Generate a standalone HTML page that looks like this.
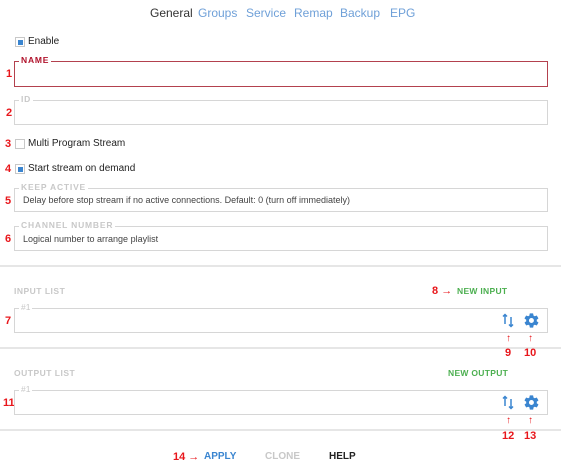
<!DOCTYPE html>
<html><head><meta charset="utf-8"><style>
*{margin:0;padding:0;box-sizing:border-box}
body{width:561px;height:470px;background:#fff;font-family:"Liberation Sans",sans-serif;position:relative;overflow:hidden;color:#333}
.a{position:absolute;white-space:nowrap}
.tab{font-size:12px;color:#6fa0d8;top:6px}
.num{color:#e8161b;font-weight:bold;font-size:11px}
.box{position:absolute;left:14px;width:534px;border:1px solid #d6d6d6}
.lg{position:absolute;top:-7px;left:4px;background:#fff;padding:0 2px;font-size:8.5px;font-weight:bold;letter-spacing:.8px;color:#c8c8c8;line-height:11px}
.cb{position:absolute;width:10px;height:10px;border:1px solid #c8c8c8;background:#fff}
.cb.on::after{content:"";position:absolute;left:2px;top:2px;width:5px;height:5px;background:#3a85d0}
.lab{font-size:10px;color:#222}
.hint{font-size:9px;color:#444}
.sec{font-size:8.5px;font-weight:bold;color:#c8c8c8;letter-spacing:.5px}
.grn{font-size:8.5px;font-weight:bold;color:#4caf50;letter-spacing:.3px}
.sep{position:absolute;left:0;width:561px;height:2px;background:#e6e6e6}
.arr{color:#e8161b;font-size:10px}
</style></head><body>
<div class="a tab" style="left:150px;color:#333">General</div>
<div class="a tab" style="left:198px">Groups</div>
<div class="a tab" style="left:246px">Service</div>
<div class="a tab" style="left:294px">Remap</div>
<div class="a tab" style="left:340px">Backup</div>
<div class="a tab" style="left:390px">EPG</div>

<div class="cb on" style="left:15px;top:37px"></div>
<div class="a lab" style="left:28px;top:36px">Enable</div>

<div class="a num" style="left:6px;top:68px">1</div>
<div class="box" style="top:61px;height:26px;border-color:#b3414e"><div class="lg" style="color:#b0112a">NAME</div></div>
<div class="a num" style="left:6px;top:107px">2</div>
<div class="box" style="top:100px;height:25px"><div class="lg">ID</div></div>

<div class="a num" style="left:5px;top:138px">3</div>
<div class="cb" style="left:15px;top:139px"></div>
<div class="a lab" style="left:28px;top:138px">Multi Program Stream</div>
<div class="a num" style="left:5px;top:163px">4</div>
<div class="cb on" style="left:15px;top:164px"></div>
<div class="a lab" style="left:28px;top:163px">Start stream on demand</div>

<div class="a num" style="left:5px;top:195px">5</div>
<div class="box" style="top:188px;height:24px"><div class="lg">KEEP ACTIVE</div><div class="a hint" style="left:8px;top:6px">Delay before stop stream if no active connections. Default: 0 (turn off immediately)</div></div>
<div class="a num" style="left:5px;top:233px">6</div>
<div class="box" style="top:226px;height:25px"><div class="lg">CHANNEL NUMBER</div><div class="a hint" style="left:8px;top:7px">Logical number to arrange playlist</div></div>

<div class="sep" style="top:265px"></div>

<div class="a sec" style="left:14px;top:286px">INPUT LIST</div>
<div class="a num" style="left:432px;top:285px">8 <span style="font-weight:normal">→</span></div>
<div class="a grn" style="left:457px;top:286px">NEW INPUT</div>
<div class="a num" style="left:5px;top:315px">7</div>
<div class="box" style="top:308px;height:25px"><div class="lg" style="font-weight:normal;letter-spacing:0">#1</div></div>

<svg class="a" style="left:502px;top:313px" width="12" height="15" viewBox="0 0 12 15"><g stroke="#3a85d0" stroke-width="1.5" fill="none"><path d="M3 11V1.5M1 3.5L3 1.5l2 2"/><path d="M9 4v9.5M7 11.5l2 2 2-2"/></g></svg>
<svg class="a" style="left:523px;top:312px" width="17" height="17" viewBox="0 0 24 24"><path fill="#3a85d0" d="M19.4 13c.04-.33.06-.66.06-1s-.02-.67-.06-1l2.1-1.65c.2-.15.24-.42.12-.64l-2-3.46c-.12-.22-.39-.3-.61-.22l-2.49 1a7.3 7.3 0 0 0-1.69-.98L14.4 2.4A.49.49 0 0 0 13.9 2h-4c-.25 0-.46.18-.49.42l-.38 2.65c-.61.25-1.17.59-1.69.98l-2.49-1a.5.5 0 0 0-.61.22l-2 3.46c-.13.22-.07.49.12.64L4.57 11c-.04.33-.07.67-.07 1s.03.67.07 1l-2.11 1.65c-.19.15-.24.42-.12.64l2 3.46c.12.22.39.3.61.22l2.49-1c.52.4 1.08.73 1.69.98l.38 2.65c.03.24.24.42.49.42h4c.25 0 .46-.18.49-.42l.38-2.65c.61-.25 1.17-.59 1.69-.98l2.49 1c.23.09.49 0 .61-.22l2-3.46c.12-.22.07-.49-.12-.64L19.4 13zM11.9 15.5a3.5 3.5 0 1 1 0-7 3.5 3.5 0 0 1 0 7z"/></svg>
<div class="a arr" style="left:506px;top:333px">↑</div>
<div class="a arr" style="left:528px;top:333px">↑</div>
<div class="sep" style="top:347px"></div>
<div class="a num" style="left:505px;top:347px">9</div>
<div class="a num" style="left:524px;top:347px">10</div>

<div class="a sec" style="left:14px;top:368px">OUTPUT LIST</div>
<div class="a grn" style="left:448px;top:368px">NEW OUTPUT</div>
<div class="a num" style="left:3px;top:397px">11</div>
<div class="box" style="top:390px;height:25px"><div class="lg" style="font-weight:normal;letter-spacing:0">#1</div></div>
<svg class="a" style="left:502px;top:395px" width="12" height="15" viewBox="0 0 12 15"><g stroke="#3a85d0" stroke-width="1.5" fill="none"><path d="M3 11V1.5M1 3.5L3 1.5l2 2"/><path d="M9 4v9.5M7 11.5l2 2 2-2"/></g></svg>
<svg class="a" style="left:523px;top:394px" width="17" height="17" viewBox="0 0 24 24"><path fill="#3a85d0" d="M19.4 13c.04-.33.06-.66.06-1s-.02-.67-.06-1l2.1-1.65c.2-.15.24-.42.12-.64l-2-3.46c-.12-.22-.39-.3-.61-.22l-2.49 1a7.3 7.3 0 0 0-1.69-.98L14.4 2.4A.49.49 0 0 0 13.9 2h-4c-.25 0-.46.18-.49.42l-.38 2.65c-.61.25-1.17.59-1.69.98l-2.49-1a.5.5 0 0 0-.61.22l-2 3.46c-.13.22-.07.49.12.64L4.57 11c-.04.33-.07.67-.07 1s.03.67.07 1l-2.11 1.65c-.19.15-.24.42-.12.64l2 3.46c.12.22.39.3.61.22l2.49-1c.52.4 1.08.73 1.69.98l.38 2.65c.03.24.24.42.49.42h4c.25 0 .46-.18.49-.42l.38-2.65c.61-.25 1.17-.59 1.69-.98l2.49 1c.23.09.49 0 .61-.22l2-3.46c.12-.22.07-.49-.12-.64L19.4 13zM11.9 15.5a3.5 3.5 0 1 1 0-7 3.5 3.5 0 0 1 0 7z"/></svg>
<div class="a arr" style="left:506px;top:415px">↑</div>
<div class="a arr" style="left:528px;top:415px">↑</div>
<div class="sep" style="top:429px"></div>
<div class="a num" style="left:502px;top:430px">12</div>
<div class="a num" style="left:524px;top:430px">13</div>

<div class="a num" style="left:173px;top:451px">14 <span style="font-weight:normal">→</span></div>
<div class="a" style="left:204px;top:451px;font-size:10px;font-weight:bold;color:#3a85d0">APPLY</div>
<div class="a" style="left:265px;top:451px;font-size:10px;font-weight:bold;color:#c8c8c8">CLONE</div>
<div class="a" style="left:329px;top:451px;font-size:10px;font-weight:bold;color:#222">HELP</div>
</body></html>
